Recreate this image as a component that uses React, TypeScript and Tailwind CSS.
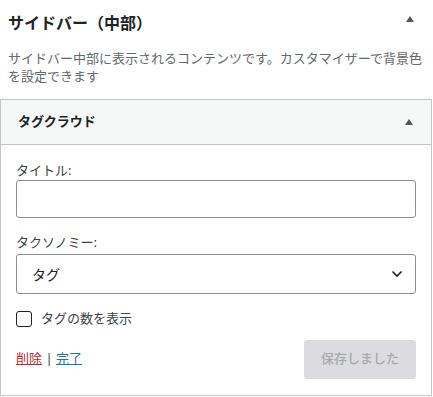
import React from 'react';

const Caret = ({ className = '' }: { className?: string }) => (
  <svg width="10" height="8" viewBox="0 0 10 8" className={className}>
    <path d="M5 1 L9 7 L1 7 Z" fill="#50575e" />
  </svg>
);

export default function App() {
  return (
    <div
      className="w-[433px] h-[397px] bg-white text-[#1d2327] overflow-hidden"
      style={{ fontFamily: '"Noto Sans", "Noto Sans CJK JP", sans-serif' }}
    >
      {/* section head */}
      <div className="flex items-center justify-between pl-[8px] pr-[18px] pt-[9px]">
        <h2 className="text-[16px] font-bold leading-[28px]">サイドバー（中部）</h2>
        <Caret className="mb-[8px]" />
      </div>
      <p className="px-[8px] mt-[12px] text-[13px] leading-[18px] text-[#646970]">
        サイドバー中部に表示されるコンテンツです。カスタマイザーで背景色を設定できます
      </p>

      {/* widget */}
      <div className="mt-[14px] mr-[1px] border border-[#c3c4c7] h-[297px]">
        <div className="flex items-center justify-between h-[45px] bg-[#f6f7f7] border-b border-[#c3c4c7] pl-[17px] pr-[17px]">
          <span className="text-[13px] font-bold">タグクラウド</span>
          <Caret />
        </div>
        <div className="px-[15px] pt-[16px]">
          <label className="block text-[13px] leading-[18px] text-[#3c434a]">タイトル:</label>
          <input
            type="text"
            className="mt-[1px] block w-full h-[38px] border border-[#8c8f94] rounded-[3px] bg-white"
          />
          <label className="block mt-[15px] text-[13px] leading-[18px] text-[#3c434a]">タクソノミー:</label>
          <div className="mt-[3px] flex items-center justify-between h-[40px] border border-[#8c8f94] rounded-[3px] pl-[15px] pr-[12px]">
            <span className="text-[14px]">タグ</span>
            <svg width="12" height="8" viewBox="0 0 12 8">
              <path d="M1.5 1.5 L6 6 L10.5 1.5" fill="none" stroke="#1d2327" strokeWidth="1.6" />
            </svg>
          </div>
          <div className="mt-[15px] flex items-center gap-[9px]">
            <span className="w-[16px] h-[16px] border border-[#1d2327] rounded-[3px] bg-white" />
            <span className="text-[13px] text-[#3c434a]">タグの数を表示</span>
          </div>
          <div className="mt-[11px] flex items-center justify-between">
            <div className="text-[13px] text-[#3c434a]">
              <a className="text-[#b32d2e] underline">削除</a> | <a className="text-[#2271b1] underline">完了</a>
            </div>
            <div className="w-[112px] h-[39px] flex items-center justify-center rounded-[3px] bg-[#dcdcde] text-[13px] font-medium text-[#a7aaad]">
              保存しました
            </div>
          </div>
        </div>
      </div>
    </div>
  );
}
